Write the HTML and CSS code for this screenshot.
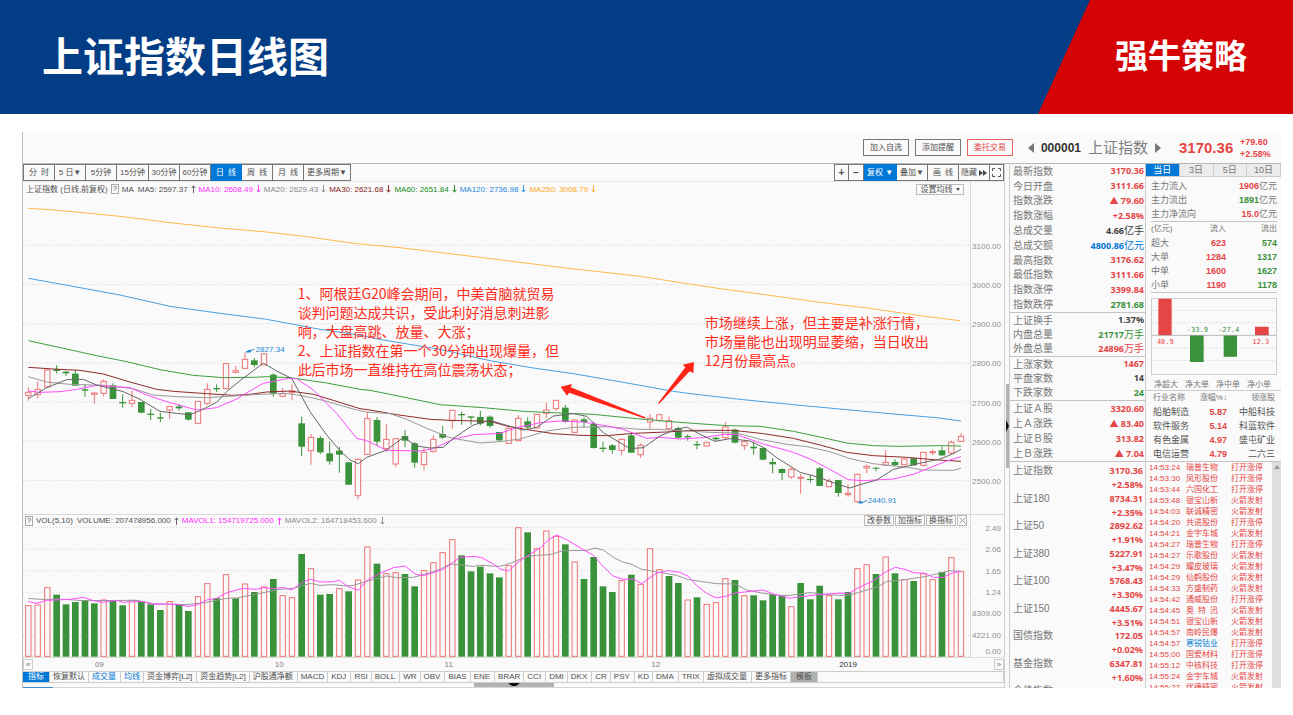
FILE: index.html
```
<!DOCTYPE html>
<html lang="zh-CN">
<head>
<meta charset="utf-8">
<title>上证指数日线图</title>
<link rel="stylesheet" href="styles.css">
</head>
<body>
<header class="banner">
  <h1 class="banner-title">上证指数日线图</h1>
  <div class="banner-brand">强牛策略</div>
</header>

<main class="app">
  <div class="topbar">
    <button class="top-btn">加入自选</button>
    <button class="top-btn">添加提醒</button>
    <button class="top-btn top-btn-red">委托交易</button>
    <div class="symbol">
      <svg class="tri" viewBox="0 0 6 10"><path d="M6 0V10L0 5Z"/></svg>
      <b class="symbol-code">000001</b>
      <span class="symbol-name">上证指数</span>
      <svg class="tri" viewBox="0 0 6 10"><path d="M0 0V10L6 5Z"/></svg>
    </div>
    <b class="last">3170.36</b>
    <div class="delta"><b>+79.60</b><b>+2.58%</b></div>
  </div>

  <section class="panel">
    <div class="toolbar">
      <button class="tool">分&ensp;时</button><button class="tool">5 日▼</button><button class="tool">5分钟</button><button class="tool tool-min">15分钟</button><button class="tool">30分钟</button><button class="tool">60分钟</button><button class="tool tool-on">日&ensp;线</button><button class="tool">周&ensp;线</button><button class="tool">月&ensp;线</button><button class="tool tool-wide">更多周期▼</button>
      <div class="tool-right">
        <button class="tool tool-icon"><b>+</b></button><button class="tool tool-icon"><b>−</b></button><button class="tool tool-on tool-menu">复权 ▼</button><button class="tool">叠加▼</button><button class="tool">画&ensp;线</button><button class="tool">隐藏<svg class="ff" viewBox="0 0 8 6"><path d="M0 0L4 3L0 6ZM4 0L8 3L4 6Z"/></svg></button><button class="tool tool-full" aria-label="全屏"><svg class="full" viewBox="0 0 9 9"><path d="M.5 3V.5H3M6 .5H8.500V3M8.500 6V8.500H6M3 8.500H.5V6"/></svg></button>
      </div>
    </div>

    <div class="pane">
      <div class="plot">
        <div class="legend legend-price">
          <span>上证指数 (日线,前复权)</span><button class="help">?</button><span>MA</span>
          <span class="ma5">MA5: 2597.37 <svg class="arr" viewBox="0 0 5 9"><path d="M2.500 9V1M.5 3.500L2.500 1L4.500 3.500"/></svg></span>
          <span class="ma10">MA10: 2608.49 <svg class="arr" viewBox="0 0 5 9"><path d="M2.500 0V8M.5 5.500L2.500 8L4.500 5.500"/></svg></span>
          <span class="ma20">MA20: 2629.43 <svg class="arr" viewBox="0 0 5 9"><path d="M2.500 0V8M.5 5.500L2.500 8L4.500 5.500"/></svg></span>
          <span class="ma30">MA30: 2621.68 <svg class="arr" viewBox="0 0 5 9"><path d="M2.500 0V8M.5 5.500L2.500 8L4.500 5.500"/></svg></span>
          <span class="ma60">MA60: 2651.84 <svg class="arr" viewBox="0 0 5 9"><path d="M2.500 0V8M.5 5.500L2.500 8L4.500 5.500"/></svg></span>
          <span class="ma120">MA120: 2736.98 <svg class="arr" viewBox="0 0 5 9"><path d="M2.500 0V8M.5 5.500L2.500 8L4.500 5.500"/></svg></span>
          <span class="ma250">MA250: 3008.79 <svg class="arr" viewBox="0 0 5 9"><path d="M2.500 0V8M.5 5.500L2.500 8L4.500 5.500"/></svg></span>
          <button class="mini mini-set">设置均线 <svg class="caret" viewBox="0 0 4 3"><path d="M0 0H4L2 3Z"/></svg></button>
        </div>
        <div class="canvas">
          <svg class="chart" id="price" viewBox="9 -402 2841 954"></svg>
          <p class="note note-a">1、阿根廷G20峰会期间，中美首脑就贸易<br>谈判问题达成共识，受此利好消息刺进影<br>响，大盘高跳、放量、大涨；<br>2、上证指数在第一个30分钟出现爆量，但<br>此后市场一直维持在高位震荡状态；</p>
          <p class="note note-b">市场继续上涨，但主要是补涨行情，<br>市场量能也出现明显萎缩，当日收出<br>12月份最高点。</p>
        </div>
      </div>
      <div class="axis axis-price"><span>3100.00</span><span>3000.00</span><span>2900.00</span><span>2800.00</span><span>2700.00</span><span>2600.00</span><span>2500.00</span></div>
    </div>

    <div class="pane pane-vol">
      <div class="plot">
        <div class="legend legend-vol">
          <button class="help">?</button><span>VOL(5,10)</span>
          <span class="vol-now">VOLUME: 207478956.000 <svg class="arr" viewBox="0 0 5 9"><path d="M2.500 9V1M.5 3.500L2.500 1L4.500 3.500"/></svg></span>
          <span class="ma10">MAVOL1: 154719725.000 <svg class="arr" viewBox="0 0 5 9"><path d="M2.500 9V1M.5 3.500L2.500 1L4.500 3.500"/></svg></span>
          <span class="ma20">MAVOL2: 164718453.600 <svg class="arr" viewBox="0 0 5 9"><path d="M2.500 0V8M.5 5.500L2.500 8L4.500 5.500"/></svg></span>
          <div class="mini-group"><button class="mini">改参数</button><button class="mini">加指标</button><button class="mini">换指标</button><button class="mini mini-close" aria-label="关闭"><svg class="close" viewBox="0 0 7 7"><path d="M.5 .5L6.500 6.500M6.500 .5L.5 6.500"/></svg></button></div>
        </div>
        <svg class="chart" id="volume" viewBox="9 48 2841 393"></svg>
      </div>
      <div class="axis axis-vol"><span>2.49</span><span>2.06</span><span>1.65</span><span>1.24</span><span>8309.00</span><span>4221.00</span><span class="zero">0.00</span></div>
    </div>

    <div class="dates"><button class="page-btn">«</button><span></span><span>09</span><span>10</span><span>11</span><span>12</span><span class="year">2019</span><button class="page-btn">»</button></div>

    <nav class="indicators">
      <button class="ind ind-on">指标</button><button class="ind">恢复默认</button><button class="ind ind-blue">成交量</button><button class="ind ind-blue">均线</button><button class="ind">资金博弈[L2]</button><button class="ind">资金趋势[L2]</button><button class="ind">沪股通净额</button><button class="ind">MACD</button><button class="ind">KDJ</button><button class="ind">RSI</button><button class="ind">BOLL</button><button class="ind">WR</button><button class="ind">OBV</button><button class="ind">BIAS</button><button class="ind">ENE</button><button class="ind">BRAR</button><button class="ind">CCI</button><button class="ind">DMI</button><button class="ind">DKX</button><button class="ind">CR</button><button class="ind">PSY</button><button class="ind">KD</button><button class="ind">DMA</button><button class="ind">TRIX</button><button class="ind">虚拟成交量</button><button class="ind">更多指标</button><button class="ind ind-gray">模板</button>
    </nav>
    <div class="foot"><i class="foot-on"></i><i class="foot-thumb"><svg class="foot-tri" viewBox="0 0 12 3"><path d="M0 0H12L8 3H4Z"/></svg></i></div>
  </section>

  <div class="strip"><i class="strip-thumb"><svg class="strip-tri" viewBox="0 0 3 12"><path d="M0 0L3 6L0 12Z"/></svg></i></div>

  <section class="quotes">
    <dl class="rows rows-10">
      <div><dt>最新指数</dt><dd class="up">3170.36</dd></div>
      <div><dt>今日开盘</dt><dd class="up">3111.66</dd></div>
      <div><dt>指数涨跌</dt><dd class="up">▲ 79.60</dd></div>
      <div><dt>指数涨幅</dt><dd class="up">+2.58%</dd></div>
      <div><dt>总成交量</dt><dd>4.66<i>亿手</i></dd></div>
      <div><dt>总成交额</dt><dd class="blue">4800.86<i>亿元</i></dd></div>
      <div><dt>最高指数</dt><dd class="up">3176.62</dd></div>
      <div><dt>最低指数</dt><dd class="up">3111.66</dd></div>
      <div><dt>指数涨停</dt><dd class="up">3399.84</dd></div>
      <div><dt>指数跌停</dt><dd class="down">2781.68</dd></div>
    </dl>
    <dl class="rows rows-3">
      <div><dt>上证换手</dt><dd>1.37%</dd></div>
      <div><dt>内盘总量</dt><dd class="down">21717<i>万手</i></dd></div>
      <div><dt>外盘总量</dt><dd class="up">24896<i>万手</i></dd></div>
    </dl>
    <dl class="rows rows-3">
      <div><dt>上涨家数</dt><dd class="up">1467</dd></div>
      <div><dt>平盘家数</dt><dd>14</dd></div>
      <div><dt>下跌家数</dt><dd class="down">24</dd></div>
    </dl>
    <dl class="rows rows-4">
      <div><dt>上证Ａ股</dt><dd class="up">3320.60</dd></div>
      <div><dt>上Ａ涨跌</dt><dd class="up">▲ 83.40</dd></div>
      <div><dt>上证Ｂ股</dt><dd class="up">313.82</dd></div>
      <div><dt>上Ｂ涨跌</dt><dd class="up">▲ 7.04</dd></div>
    </dl>
    <dl class="indexes">
      <div><dt>上证指数</dt><dd class="up">3170.36<br>+2.58%</dd></div>
      <div><dt>上证180</dt><dd class="up">8734.31<br>+2.35%</dd></div>
      <div><dt>上证50</dt><dd class="up">2892.62<br>+1.91%</dd></div>
      <div><dt>上证380</dt><dd class="up">5227.91<br>+3.47%</dd></div>
      <div><dt>上证100</dt><dd class="up">5768.43<br>+3.30%</dd></div>
      <div><dt>上证150</dt><dd class="up">4445.67<br>+3.51%</dd></div>
      <div><dt>国债指数</dt><dd class="up">172.05<br>+0.02%</dd></div>
      <div><dt>基金指数</dt><dd class="up">6347.81<br>+1.60%</dd></div>
    </dl>
    <dl class="indexes-more"><dt>企债指数</dt></dl>
  </section>

  <section class="flow">
    <div class="flow-tabs"><button class="flow-tab flow-tab-on">当日</button><button class="flow-tab">3日</button><button class="flow-tab">5日</button><button class="flow-tab">10日</button></div>
    <dl class="main-flow">
      <div><dt>主力流入</dt><dd><b class="up">1906</b>亿元</dd></div>
      <div><dt>主力流出</dt><dd><b class="down">1891</b>亿元</dd></div>
      <div><dt>主力净流向</dt><dd><b class="up">15.0</b>亿元</dd></div>
    </dl>
    <table class="grid orders">
      <tr><th>(亿元)</th><th>流入</th><th>流出</th></tr>
      <tr><td>超大</td><td class="up">623</td><td class="down">574</td></tr>
      <tr><td>大单</td><td class="up">1284</td><td class="down">1317</td></tr>
      <tr><td>中单</td><td class="up">1600</td><td class="down">1627</td></tr>
      <tr><td>小单</td><td class="up">1190</td><td class="down">1178</td></tr>
    </table>
    <svg class="net" viewBox="0 0 378 231">
      <rect class="net-box" x="1" y="1" width="376" height="229"/>
      <path class="net-grid" d="M2 37H376M2 74H376M2 149H376M2 187H376"/>
      <path class="net-red" d="M22 2H62V112H22ZM312 86H353V112H312Z"/>
      <path class="net-green" d="M117 112H158V192H117ZM218 112H258V176H218Z"/>
      <path class="net-zero" d="M2 112H376"/>
      <text class="net-up" x="43" y="138">48.9</text>
      <text class="net-down" x="139" y="103">-33.9</text>
      <text class="net-down" x="233" y="103">-27.4</text>
      <text class="net-up" x="329" y="138">12.3</text>
    </svg>
    <div class="net-names"><span>净超大</span><span>净大单</span><span>净中单</span><span>净小单</span></div>
    <table class="grid sectors">
      <tr><th>行业名称</th><th>涨幅%↓</th><th>领涨股</th></tr>
      <tr><td>船舶制造</td><td class="up">5.87</td><td>中船科技</td></tr>
      <tr><td>软件服务</td><td class="up">5.14</td><td>科蓝软件</td></tr>
      <tr><td>有色金属</td><td class="up">4.97</td><td>盛屯矿业</td></tr>
      <tr><td>电信运营</td><td class="up">4.79</td><td>二六三</td></tr>
    </table>
    <div class="log-wrap">
      <table class="log">
        <tr><td>14:53:24</td><td>瑞普生物</td><td>打开涨停</td></tr>
        <tr><td>14:53:30</td><td>凤形股份</td><td>打开涨停</td></tr>
        <tr><td>14:53:44</td><td>六国化工</td><td>打开涨停</td></tr>
        <tr><td>14:53:48</td><td>银宝山新</td><td>火箭发射</td></tr>
        <tr><td>14:54:03</td><td>联诚精密</td><td>火箭发射</td></tr>
        <tr><td>14:54:20</td><td>共进股份</td><td>打开涨停</td></tr>
        <tr><td>14:54:21</td><td>金宇车城</td><td>火箭发射</td></tr>
        <tr><td>14:54:27</td><td>瑞普生物</td><td>打开涨停</td></tr>
        <tr><td>14:54:27</td><td>乐歌股份</td><td>火箭发射</td></tr>
        <tr><td>14:54:29</td><td>耀皮玻璃</td><td>火箭发射</td></tr>
        <tr><td>14:54:29</td><td>仙鹤股份</td><td>火箭发射</td></tr>
        <tr><td>14:54:33</td><td>方盛制药</td><td>火箭发射</td></tr>
        <tr><td>14:54:42</td><td>通威股份</td><td>打开涨停</td></tr>
        <tr><td>14:54:45</td><td>奥&ensp;特&ensp;迅</td><td>火箭发射</td></tr>
        <tr><td>14:54:51</td><td>银宝山新</td><td>火箭发射</td></tr>
        <tr><td>14:54:57</td><td>南岭民爆</td><td>火箭发射</td></tr>
        <tr><td>14:54:57</td><td class="blue">寒锐钴业</td><td>打开涨停</td></tr>
        <tr><td>14:55:00</td><td>国瓷材料</td><td>打开涨停</td></tr>
        <tr><td>14:55:12</td><td>中核科技</td><td>打开涨停</td></tr>
        <tr><td>14:55:24</td><td>金宇车城</td><td>火箭发射</td></tr>
        <tr><td>14:55:27</td><td>优德精密</td><td>火箭发射</td></tr>
      </table>
      <div class="log-scroll"><svg class="log-tri" viewBox="0 0 6 4"><path d="M0 4H6L3 0Z"/></svg></div>
    </div>
  </section>
</main>
<script src="chart.js"></script>
</body>
</html>
```

FILE: styles.css
```
* { box-sizing: border-box; }
body { margin: 0; background: #fff; color: #505050; font: 8px/11px "Liberation Sans", "Noto Sans CJK SC", sans-serif; }
button { margin: 0; padding: 0; border: 0; background: none; color: inherit; font: inherit; white-space: nowrap; }
dl, dd, p, h1 { margin: 0; }
svg { display: block; }
i { font-style: normal; }

.up { color: #e64545; }
.down { color: #3a923a; }
.blue { color: #0078d7; }

/* banner */
.banner { display: flex; align-items: stretch; justify-content: space-between; height: 114px; padding-left: 42px; color: #fff; background: #033d85; font-family: "Noto Sans CJK SC", sans-serif; }
.banner-title { padding-top: 24px; font-size: 41px; line-height: 60px; font-weight: 700; }
.banner-brand { width: 255px; padding: 30px 46px 0 0; background: #d40404; clip-path: polygon(52px 0, 100% 0, 100% 100%, 0 100%); font-size: 33px; line-height: 48px; font-weight: 700; text-align: right; }

/* terminal frame */
.app { display: grid; grid-template-columns: 1fr 5px 136px 135px; margin: 18px 12px 0 22px; border-left: 1px solid #c0c0c0; background: #fafafa; overflow: hidden; }

.topbar { grid-column: 1 / -1; display: flex; align-items: center; justify-content: flex-end; height: 32px; padding-right: 10px; border-bottom: 1px solid #b8b8b8; }
.top-btn { width: 46px; height: 17px; margin-right: 6px; border: 1px solid #777; line-height: 15px; }
.top-btn-red { border-color: #e86060; color: #e64545; }
.symbol { display: flex; align-items: center; gap: 7px; margin: 0 18px 0 9px; }
.symbol-code { color: #333; font-size: 12px; line-height: 16px; }
.symbol-name { color: #808080; font-size: 15px; line-height: 20px; }
.tri { width: 6px; height: 10px; fill: #777; }
.last { width: 61px; color: #e64545; font-size: 15px; line-height: 20px; }
.delta { display: flex; flex-direction: column; width: 31px; color: #e64545; font-size: 9px; line-height: 12px; }

/* period toolbar */
.panel { min-width: 0; border-right: 1px solid #d0d0d0; }
.toolbar { display: flex; height: 18px; border-bottom: 1px solid #e8e8e8; }
.tool { display: flex; align-items: center; justify-content: center; width: 31px; height: 17px; border: 1px solid #777; border-left-width: 0; background: #fafafa; }
.tool:first-child { width: 32px; border-left-width: 1px; }
.tool-min { width: 32px; }
.tool-wide { width: 47px; }
.tool-on { border-color: #0078d7; background: #0078d7; color: #fff; }
.tool-menu { width: 33px; }
.tool-icon, .tool-icon:first-child { width: 15px; font-size: 10px; }
.tool-full { width: 14px; }
.tool-right { display: flex; margin-left: auto; }
.ff { width: 8px; height: 6px; margin-left: 2px; fill: #444; }
.full { width: 9px; height: 9px; fill: none; stroke: #555; }

/* panes */
.pane { display: flex; }
.pane-vol { border-top: 1px solid #d8d8d8; }
.plot { flex: 1; min-width: 0; }
.legend { display: flex; align-items: center; gap: 3px; padding-left: 3px; white-space: nowrap; }
.legend span { display: flex; align-items: center; gap: 3px; }
.legend-price { height: 14px; }
.legend-vol { height: 11px; padding-left: 2px; }
.help { width: 8px; height: 10px; border: 1px solid #aaa; line-height: 8px; }
.arr { width: 5px; height: 8px; fill: none; stroke: currentColor; }
.ma5 { margin-left: 1px; }
.vol-now { margin-left: 1px; }
.ma10 { color: #ff2cff; }
.ma20 { color: #888; }
.ma30 { color: #8b1a1a; }
.ma60 { color: #128a12; }
.ma120 { color: #1e88dc; }
.ma250 { color: #ffa826; }
.mini { display: flex; align-items: center; justify-content: center; gap: 3px; height: 11px; padding: 0 2px; border: 1px solid #bbb; background: #fafafa; line-height: 9px; }
.mini-set { width: 48px; margin: 0 6px 0 auto; }
.mini-close { width: 10px; padding: 0; }
.caret { width: 4px; height: 3px; fill: #555; }
.mini-group { display: flex; gap: 1px; margin: 0 3px 0 auto; }
.close { width: 7px; height: 7px; fill: none; stroke: #777; stroke-width: .7; }
.canvas { position: relative; }
.chart { width: 100%; height: auto; }
.axis { width: 34px; padding-right: 3px; border-left: 1px solid #d8d8d8; color: #909090; text-align: right; display: flex; flex-direction: column; }
.axis span { display: flex; align-items: center; justify-content: flex-end; flex: 1; }
.axis-price { padding-top: 45px; padding-bottom: 13px; }
.axis-vol { padding-top: 3px; }
.axis-vol .zero { flex: 0 0 10px; }

.note { position: absolute; color: #ff2d20; font: 14px/19px "Noto Sans CJK SC", sans-serif; white-space: nowrap; }
.note-a { left: 29%; top: 88px; }
.note-b { left: 72%; top: 117px; }

.dates { display: grid; grid-template-columns: 10px 62fr 180fr 170fr 207fr 188fr 155fr 10px; align-items: center; height: 14px; border-top: 1px solid #ddd; color: #808080; }
.year { color: #333; }
.page-btn { height: 11px; border: 1px solid #ccc; line-height: 8px; color: #777; }

.indicators { display: flex; height: 12px; border: 1px solid #ccc; border-left: 0; overflow: hidden; }
.ind { padding: 0 4px 0 3px; border-right: 1px solid #ccc; line-height: 10px; }
.ind:nth-child(even) { padding: 0 3px; }
.ind-on { padding: 0 5px; background: #0078d7; color: #fff; }
.ind-blue { color: #0078d7; }
.ind-gray { padding: 0 5px; background: #b0b0b0; }
.foot { display: flex; height: 5px; border-bottom: 1px solid #d5d5d5; }
.foot-on { width: 30px; height: 1px; margin-top: 4px; background: #3f8fd0; }
.foot-thumb { width: 80px; height: 4px; margin-left: 421px; background: #b2b2b2; }
.foot-tri { width: 12px; height: 3px; margin: 0 auto; fill: #111; }

.strip { display: flex; align-items: center; border-right: 1px solid #ccc; }
.strip-thumb { display: flex; align-items: center; width: 4px; height: 84px; margin-left: 1px; background: #b2b2b2; }
.strip-tri { width: 3px; height: 12px; fill: #111; }

/* quote column */
.quotes { contain: size; overflow: hidden; padding-left: 3px; border-right: 1px solid #ccc; color: #777; }
.quotes dt { font-size: 10px; }
.quotes dd { color: #404040; font: bold 9px/14px "Noto Sans", "Noto Sans CJK SC", sans-serif; text-align: right; }
.quotes dd.up { color: #e64545; }
.quotes dd.down { color: #3a923a; }
.quotes dd.blue { color: #0078d7; }
.quotes dd i { font-size: 10px; font-weight: 400; }
.rows { display: grid; grid-auto-rows: 1fr; margin-left: -3px; padding: 0 1px 0 3px; border-bottom: 1px solid #c4c4c4; }
.rows div { display: flex; align-items: center; justify-content: space-between; min-height: 0; }
.rows-10 { height: 149px; }
.rows-3 { height: 44px; }
.rows-4 { height: 61px; }
.indexes { display: grid; grid-template-rows: repeat(8, 1fr); height: 220px; margin-top: 2px; padding-right: 2px; }
.indexes div { display: flex; justify-content: space-between; min-height: 0; }
.indexes dt, .indexes-more dt { line-height: 14px; }

/* money flow column */
.flow { contain: size; overflow: hidden; color: #777; }
.flow-tabs { display: grid; grid-template-columns: repeat(4, 1fr); height: 13px; }
.flow-tab { border-right: 1px solid #ccc; border-bottom: 1px solid #ccc; background: #ececec; font-size: 9px; line-height: 12px; }
.flow-tab-on { background: #0078d7; color: #fff; }
.main-flow { display: grid; grid-auto-rows: 1fr; height: 45px; margin: 0 4px 0 5px; padding-top: 2px; border-bottom: 1px solid #c4c4c4; font-size: 9px; }
.main-flow div { display: flex; align-items: center; justify-content: space-between; }
.grid { width: 126px; margin: 0 4px 0 5px; border-collapse: collapse; table-layout: fixed; }
.grid th, .grid td { height: 14px; padding: 0; font-size: 9px; line-height: 14px; font-weight: 400; text-align: right; white-space: nowrap; }
.grid th { font-size: 8px; }
.grid th:first-child, .grid td:first-child { text-align: left; }
.orders { border-bottom: 1px solid #c4c4c4; }
.grid .up, .grid .down { font-weight: 700; }
.orders th:nth-child(2) { width: 42px; }
.orders th:nth-child(3) { width: 51px; }
.net { width: 126px; height: 77px; margin: 5px 4px 0 5px; }
.net-box { fill: none; stroke: #bbb; stroke-width: 2; }
.net-grid { stroke: #d8d8d8; stroke-width: 3; stroke-dasharray: 6 6; }
.net-zero { stroke: #999; stroke-width: 2; }
.net-red { fill: #e64545; }
.net-green { fill: #3a923a; }
.net text { font: 21px "DejaVu Sans Mono", monospace; text-anchor: middle; }
.net-up { fill: #e64545; }
.net-down { fill: #3a923a; }
.net-names { display: flex; gap: 7px; height: 16px; padding: 4px 0 0 8px; border-bottom: 1px solid #ccc; }
.sectors { margin-left: 7px; width: 122px; color: #555; }
.sectors th { color: #777; }
.sectors th:nth-child(2) { width: 36px; }
.sectors th:nth-child(3) { width: 48px; }
.log-wrap { display: flex; justify-content: space-between; border-top: 1px solid #c4c4c4; }
.log { margin-left: 3px; border-collapse: collapse; color: #e64545; }
.log td { height: 11px; padding: 0; line-height: 11px; white-space: nowrap; }
.log td:nth-child(1) { width: 37px; }
.log td:nth-child(2) { width: 45px; }
.log .blue { color: #0078d7; }
.log-scroll { width: 9px; padding-top: 3px; background: #dedede; }
.log-tri { width: 6px; height: 4px; margin: 0 auto; fill: #999; }

/* chart marks: three drawing units to one pixel */
.rule { fill: none; stroke: #d2d2d2; stroke-width: 3; stroke-dasharray: 3 6; }
.rise { fill: none; stroke: #ee7474; stroke-width: 3; }
.rise-body { fill: #fafafa; stroke: #ee7474; stroke-width: 3; }
.fall { fill: #3a923a; stroke: #3a923a; stroke-width: 3; }
.fall-body { fill: #3a923a; }
.line { fill: none; stroke-width: 3; stroke-linejoin: round; }
.line-ma5 { stroke: #666; }
.line-ma10 { stroke: #ff4cff; }
.line-ma20 { stroke: #999; }
.line-ma30 { stroke: #8e2a2a; }
.line-ma60 { stroke: #3f9f3f; }
.line-ma120 { stroke: #4a9fe0; }
.line-ma250 { stroke: #ffb94a; }
.mark { fill: #1e88d4; font: 24px "Liberation Sans", sans-serif; }
.mark-line { fill: #1e88d4; stroke: #1e88d4; stroke-width: 3; }
.pointer { fill: #ff2416; }
```

FILE: chart.js
```
const STEP = 28.26;
const FIRST = 25;

// r = rising, g = falling; then high, body top, body bottom, low
const candles = `r172,187,196,212 r155,178,194,205 r118,120,171,174 g106,118,123,130 g122,125,130,138 g121,131,167,167 g163,178,182,200 r187,189,193,221 r148,154,190,200 g160,166,207,207
g193,216,220,233 r182,211,220,232 g216,216,248,250 g237,251,255,270 g248,262,266,276 r227,230,240,267 g222,229,235,242 g247,247,269,272 r214,214,280,280 r160,178,220,225
g163,174,178,186 r100,101,176,178 r108,122,127,130 r67,88,115,117 g84,91,105,112 r70,72,105,105 g130,134,191,200 r174,191,199,200 r163,183,187,210 g260,280,350,378
r312,322,362,404 g318,324,367,372 g335,370,394,404 g350,362,374,428 g396,397,464,464 r385,388,497,508 r245,266,373,375 g262,270,335,348 r282,328,356,365 r325,326,402,410
g300,318,332,352 g336,340,398,413 r353,367,404,422 r316,328,364,368 g288,312,323,326 r241,241,272,296 g245,252,256,284 g259,259,263,284 g243,261,281,286 g256,260,288,293
g306,306,331,334 r292,295,340,340 r255,265,332,334 g262,274,292,298 r252,253,294,296 r218,240,250,264 r210,211,236,242 g225,233,276,278 r268,270,307,308 g262,268,276,291
g276,282,354,356 g336,353,357,367 g342,346,360,371 r325,328,361,376 g310,316,368,368 r340,346,374,384 r252,265,276,296 r253,254,271,276 r260,272,296,298 g290,294,323,324
g313,318,322,332 g333,342,346,358 r335,338,348,351 g320,323,328,334 r276,291,323,328 g296,299,338,340 r330,335,347,360 g335,350,355,374 g352,354,389,391 g384,396,403,430
g415,417,429,450 r412,418,441,446 r432,442,445,491 g434,447,449,458 g411,415,468,468 r445,454,470,473 g450,450,489,500 r463,490,494,500 r430,433,515,518 r403,409,414,429
g411,413,416,424 r361,397,406,408 g388,396,405,409 r384,387,404,404 g383,385,406,407 r366,367,406,410 r360,365,368,375 g350,361,376,378 r332,337,369,373 r310,319,334,335`;

const volumes = `r286 r284 r232 g254 g283 g276 g270 g280 r269 g273 g286 r270 g275 g283 g300 r274 g285 g303 r259 r220
g264 r193 g265 r221 g246 r230 g207 r256 r262 g132 r175 g254 g252 r235 g244 r209 r110 g161 r190 r187
g192 g229 r181 r157 r127 r88 g136 g184 g170 g190 g202 r166 r52 g67 r115 r62 r78 g103 r155 g207
g141 g229 g246 r211 g194 r222 r115 r178 g198 g219 r269 g262 r282 r277 r205 g210 r256 g256 g271 g252
g257 r289 g219 g268 g227 r256 g268 g246 r175 r163 g192 r140 g190 r208 g213 r190 r208 g186 r142 r184`;

const priceLines = {
  ma250: "25,-365 90,-361 200,-351 300,-341 450,-322 600,-306 740,-294 860,-280 1010,-259 1140,-247 1380,-218 1620,-188 1860,-161 2100,-124 2250,-104 2400,-83 2550,-65 2700,-43 2820,-28",
  ma120: "25,-155 120,-138 300,-105 450,-71 600,-50 740,-32 900,-2 1010,14 1090,30 1260,58 1410,92 1540,114 1660,131 1810,157 1960,184 2020,192 2170,209 2320,224 2480,239 2620,252 2750,263 2823,273",
  ma60: "25,32 130,55 230,77 320,95 420,119 520,136 610,143 700,142 740,140 810,143 920,159 1020,178 1050,181 1140,199 1260,224 1390,233 1510,244 1620,249 1720,253 1840,265 1940,274 2020,280 2120,287 2220,289 2320,304 2400,321 2480,339 2560,347 2640,349 2760,347 2823,348",
  ma30: "25,112 100,117 180,121 250,132 330,156 410,178 460,184 560,191 640,196 690,193 740,186 810,183 880,193 940,211 1020,236 1050,240 1130,254 1230,268 1290,271 1410,274 1460,288 1510,297 1600,311 1680,316 1760,317 1840,310 1940,306 2020,301 2140,301 2230,311 2320,325 2400,345 2480,367 2560,377 2660,382 2740,389 2823,394",
  ma20: "25,140 80,156 150,163 250,166 340,176 400,195 470,200 560,203 640,198 720,193 800,190 850,198 910,211 1010,240 1040,246 1110,251 1160,268 1220,295 1290,323 1380,339 1440,335 1500,327 1580,303 1660,292 1760,290 1860,298 1920,298 1980,302 2070,307 2150,309 2220,328 2300,343 2360,350 2430,365 2490,386 2560,401 2660,412 2710,420 2800,421 2823,415",
  ma10: "25,183 60,187 120,185 170,178 230,166 330,173 380,195 440,215 530,240 590,233 650,207 700,177 730,160 800,146 830,146 880,180 950,250 1010,325 1040,332 1100,361 1200,363 1240,356 1300,328 1360,314 1440,310 1490,293 1560,278 1620,273 1690,276 1750,286 1810,298 1880,325 1920,322 1980,327 2050,323 2110,313 2150,314 2230,342 2320,367 2370,387 2420,413 2485,449 2530,452 2620,447 2680,433 2740,409 2780,393 2823,380",
  ma5: "25,206 80,173 140,149 190,148 230,165 310,185 360,208 420,244 470,250 510,254 540,242 590,217 620,185 660,152 700,122 730,99 770,123 815,145 870,245 920,315 960,362 990,390 1015,401 1040,382 1100,360 1150,322 1190,348 1230,354 1270,352 1300,325 1360,285 1410,271 1460,286 1510,300 1550,292 1600,258 1660,251 1700,259 1750,308 1830,356 1870,353 1920,318 1960,301 2000,291 2040,313 2085,334 2130,326 2190,333 2230,352 2270,383 2340,427 2400,443 2450,462 2490,474 2520,464 2570,450 2620,418 2680,404 2760,387 2800,371 2823,358"
};

const volumeLines = {
  ma20: "25,265 60,268 130,268 190,272 350,271 400,281 500,284 560,277 620,265 650,264 720,250 780,238 820,235 872,220 900,226 940,224 980,228 1000,226 1040,214 1100,198 1130,203 1180,202 1220,191 1260,178 1290,162 1360,169 1380,166 1440,169 1470,160 1520,140 1550,136 1590,134 1630,122 1700,121 1725,114 1750,120 1780,142 1810,157 1830,161 1865,178 1890,182 1970,196 2005,209 2090,221 2145,222 2180,240 2230,250 2280,256 2310,256 2370,248 2410,253 2460,256 2485,256 2520,246 2575,230 2600,215 2660,208 2720,199 2790,182 2823,184",
  ma10: "25,275 50,280 80,271 150,268 190,262 220,272 250,277 290,271 310,277 360,274 400,283 440,282 480,284 505,290 535,283 560,270 590,265 620,248 670,235 710,238 730,233 760,236 790,232 815,240 850,215 872,208 900,216 940,215 957,211 985,230 1015,241 1040,212 1080,190 1120,173 1155,168 1185,192 1210,197 1270,178 1320,142 1360,139 1385,143 1420,162 1440,177 1465,183 1500,152 1560,114 1585,90 1610,75 1640,89 1690,119 1720,136 1750,170 1780,198 1810,208 1840,207 1865,221 1910,189 1945,182 1980,187 2005,199 2030,227 2060,250 2088,264 2120,258 2145,249 2230,240 2260,252 2310,265 2340,260 2400,254 2460,249 2485,251 2510,236 2560,212 2600,184 2626,172 2655,178 2680,188 2715,190 2740,202 2770,202 2800,188 2823,184"
};

const rules = ys => `<path class="rule" d="${ys.map(y => `M9 ${y}H2850`).join("")}"/>`;
const lines = set => Object.entries(set)
  .map(([name, points]) => `<polyline class="line line-${name}" points="${points}"/>`).join("");
const center = i => Math.round(FIRST + i * STEP);

function candle(text, i) {
  const x = center(i);
  const [high, top, bottom, low] = text.slice(1).split(",").map(Number);
  if (text[0] === "g") {
    return `<path class="fall" d="M${x} ${high}V${low}"/>` +
      `<rect class="fall-body" x="${x - 10}" y="${top}" width="20" height="${Math.max(bottom - top, 3)}"/>`;
  }
  return `<path class="rise" d="M${x} ${high}V${top}M${x} ${bottom}V${low}"/>` +
    `<rect class="rise-body" x="${x - 8}" y="${top}" width="16" height="${bottom - top}"/>`;
}

function bar(text, i) {
  const x = center(i);
  const top = Number(text.slice(1));
  return text[0] === "g"
    ? `<rect class="fall-body" x="${x - 10}" y="${top}" width="20" height="${440 - top}"/>`
    : `<rect class="rise-body" x="${x - 8}" y="${top + 1}" width="16" height="${438 - top}"/>`;
}

document.getElementById("price").innerHTML =
  rules([-254, -136, -19, 99, 216, 333, 451]) +
  candles.split(/\s+/).map(candle).join("") +
  lines(priceLines) +
  `<path class="mark-line" d="M703 58L684 64M678 66L690 60L692 66Z"/><text class="mark" x="707" y="66">2827.34</text>
   <path class="mark-line" d="M2541 511L2528 517M2516 519L2522 513L2528 519Z"/><text class="mark" x="2543" y="519">2440.91</text>
   <path class="pointer" d="M1622 170L1656 162L1652 172L1876 262V266L1647 188L1641 197Z"/>
   <path class="pointer" d="M1914 220L1996 112L1988 104L2022 96L2020 130L2009 124L1917 222Z"/>`;

document.getElementById("volume").innerHTML =
  rules([52, 118, 182, 247, 311, 376, 439]) +
  volumes.split(/\s+/).map(bar).join("") +
  lines(volumeLines);
```
